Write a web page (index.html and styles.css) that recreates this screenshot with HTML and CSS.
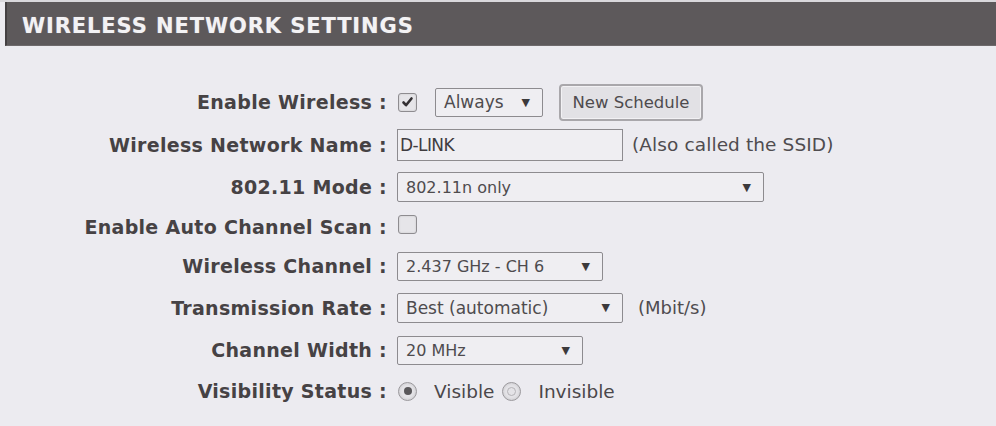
FILE: index.html
```html
<!DOCTYPE html>
<html>
<head>
<meta charset="utf-8">
<link rel="stylesheet" href="styles.css">
</head>
<body>
<div class="page">
  <div class="topline"></div>
  <div class="header">WIRELESS NETWORK SETTINGS</div>
  <div class="form">
    <div class="label">Enable Wireless :</div>
    <div class="ctrl">
      <span class="check on"><svg width="13" height="12" viewBox="0 0 13 12"><path d="M2.5 6.5 L5 9.2 L10.5 2.5" fill="none" stroke="#333033" stroke-width="2.6" stroke-linecap="round" stroke-linejoin="round"/></svg></span>
      <div class="sel sel-always"><span class="val">Always</span><span class="arrow">▼</span></div>
      <button class="btn">New Schedule</button>
    </div>

    <div class="label">Wireless Network Name :</div>
    <div class="ctrl">
      <input class="txt" type="text" value="D-LINK">
      <span class="note note-ssid">(Also called the SSID)</span>
    </div>

    <div class="label">802.11 Mode :</div>
    <div class="ctrl">
      <div class="sel sel-mode"><span class="val">802.11n only</span><span class="arrow">▼</span></div>
    </div>

    <div class="label">Enable Auto Channel Scan :</div>
    <div class="ctrl ctrl-scan">
      <span class="check"></span>
    </div>

    <div class="label">Wireless Channel :</div>
    <div class="ctrl">
      <div class="sel sel-chan"><span class="val">2.437 GHz - CH 6</span><span class="arrow">▼</span></div>
    </div>

    <div class="label">Transmission Rate :</div>
    <div class="ctrl">
      <div class="sel sel-rate"><span class="val">Best (automatic)</span><span class="arrow">▼</span></div>
      <span class="note note-mbit">(Mbit/s)</span>
    </div>

    <div class="label">Channel Width :</div>
    <div class="ctrl">
      <div class="sel sel-width"><span class="val">20 MHz</span><span class="arrow">▼</span></div>
    </div>

    <div class="label">Visibility Status :</div>
    <div class="ctrl">
      <span class="radio on"><span class="dot"></span></span>
      <span class="rlabel rl-vis">Visible</span>
      <span class="radio"><span class="ring"></span></span>
      <span class="rlabel rl-invis">Invisible</span>
    </div>
  </div>
</div>
</body>
</html>
```

FILE: styles.css
```css
html, body {
  margin: 0;
  padding: 0;
  background: #ecebf0;
}
body {
  width: 996px;
  height: 426px;
  overflow: hidden;
  font-family: "DejaVu Sans", Verdana, sans-serif;
}
.topline {
  height: 2px;
  background: #d9d8dc;
}
.header {
  margin-left: 5px;
  height: 44px;
  box-sizing: border-box;
  background: #5d595b;
  border-left: 2px solid #444042;
  border-bottom: 1px solid #6e6a6c;
  color: #f3f2f4;
  font-weight: bold;
  font-size: 21px;
  letter-spacing: 0.9px;
  line-height: 42px;
  padding-top: 3px;
  padding-left: 15px;
  text-shadow: 0 0 1px rgba(255,255,255,0.4);
}
.form {
  display: grid;
  grid-template-columns: 387px 1fr;
  grid-template-rows: 42px 43px 42px 38px 40px 43px 42px 40px;
  column-gap: 10px;
  margin-top: 35px;
  align-items: center;
}
.label {
  text-align: right;
  font-weight: bold;
  font-size: 19px;
  letter-spacing: 0.3px;
  color: #464244;
  white-space: nowrap;
}
.ctrl {
  display: flex;
  align-items: center;
  color: #555255;
}
.ctrl-scan {
  align-self: start;
  padding-top: 7px;
}
.check {
  width: 17px;
  height: 17px;
  border: 1.5px solid #8e8c90;
  border-radius: 3px;
  background: #e6e5e9;
  display: flex;
  align-items: center;
  justify-content: center;
  margin-left: 1px;
  box-shadow: inset 0 0 2px rgba(0,0,0,0.15);
}
.sel {
  display: flex;
  align-items: center;
  box-sizing: border-box;
  border: 1.5px solid #8d8b8f;
  border-radius: 2px;
  background: #efeef2;
  font-size: 16px;
  color: #4e4b4e;
  padding: 0 12px 0 8px;
  white-space: nowrap;
}
.sel .arrow {
  margin-left: auto;
  font-size: 11px;
  color: #3c3a3c;
}
.sel-always {
  width: 108px;
  height: 29px;
  margin-left: 18px;
  font-size: 17px;
}
.sel-mode { width: 367px; height: 30px; }
.sel-chan { width: 206px; height: 29px; }
.sel-rate { width: 226px; height: 30px; font-size: 17px; }
.sel-width { width: 186px; height: 29px; }
.btn {
  margin-left: 16px;
  width: 144px;
  height: 37px;
  border: 2px solid #a9a7ab;
  border-radius: 4px;
  background: #e2e1e5;
  box-shadow: inset 0 0 0 1px #f2f1f4;
  font-family: "DejaVu Sans", Verdana, sans-serif;
  font-size: 16.5px;
  color: #4e4b4e;
  padding: 0;
}
.txt {
  width: 226px;
  height: 32px;
  box-sizing: border-box;
  border: 1.5px solid #8d8b8f;
  border-radius: 0;
  background: #efeef2;
  font-family: "DejaVu Sans", Verdana, sans-serif;
  font-size: 17px;
  letter-spacing: -0.6px;
  color: #3f3c3f;
  padding: 0 0 0 2px;
  margin: 0;
}
.note {
  font-size: 18.5px;
  color: #4f4c4f;
  white-space: nowrap;
}
.note-ssid { margin-left: 9px; letter-spacing: 0.1px; }
.note-mbit { margin-left: 15px; font-size: 18px; }
.radio {
  width: 17px;
  height: 17px;
  border-radius: 50%;
  border: 1.5px solid #9a989c;
  background: #e4e3e7;
  display: flex;
  align-items: center;
  justify-content: center;
  margin-left: 1px;
  box-shadow: inset 0 0 3px rgba(0,0,0,0.15);
}
.radio .dot {
  width: 8px;
  height: 8px;
  border-radius: 50%;
  background: #5a585b;
}
.radio .ring {
  width: 7px;
  height: 7px;
  border-radius: 50%;
  border: 1px solid #b5b3b7;
}
.rlabel {
  font-size: 18.5px;
  color: #4a474a;
}
.rl-vis { margin-left: 17px; margin-right: 7px; }
.rl-invis { margin-left: 17px; }
```
